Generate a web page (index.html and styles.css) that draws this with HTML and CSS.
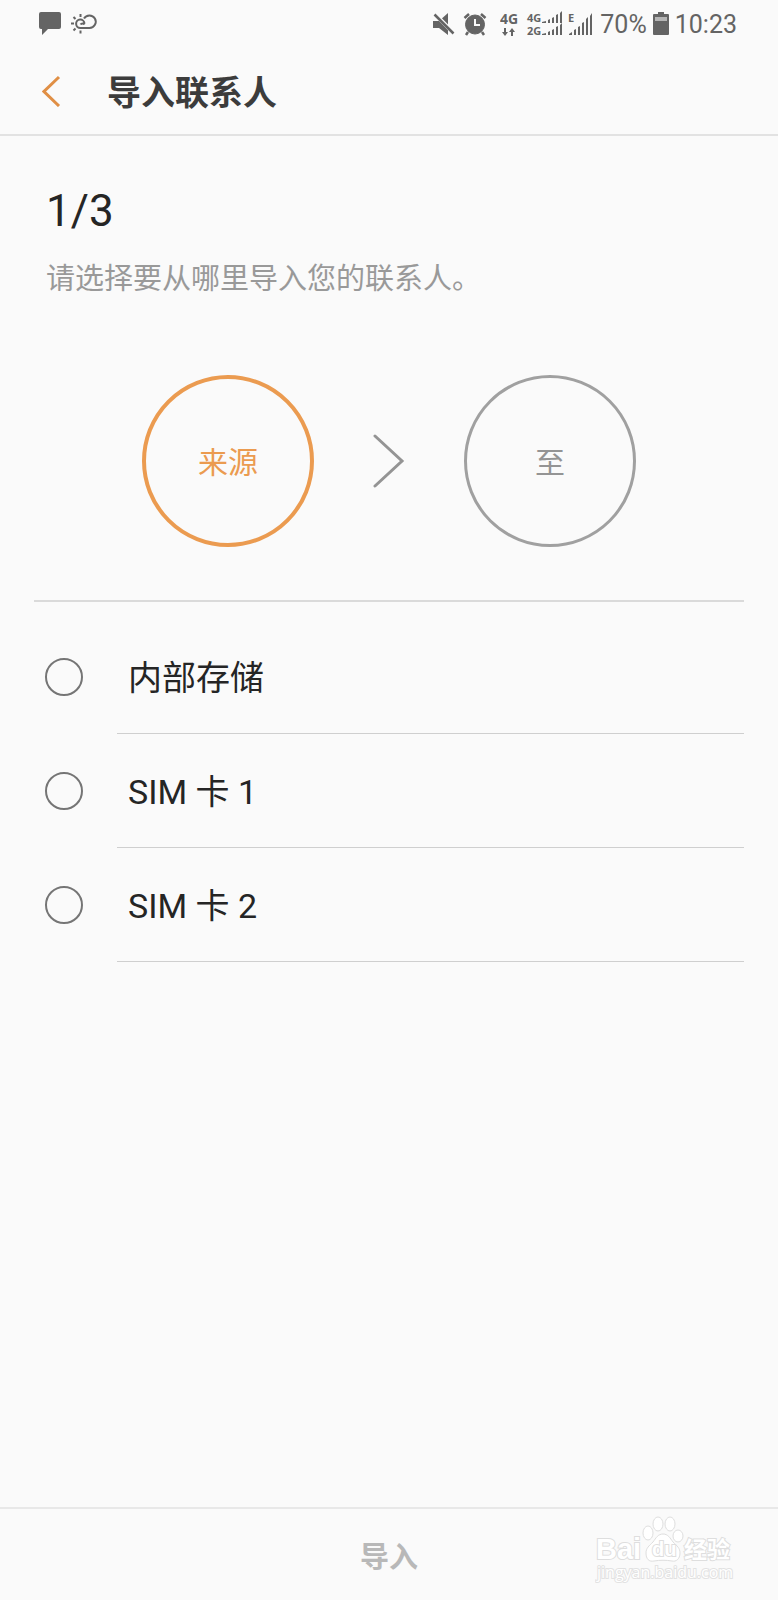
FILE: index.html
```html
<!DOCTYPE html>
<html lang="zh-CN">
<head>
	<meta charset="UTF-8">
	<meta name="viewport" content="width=device-width, initial-scale=1">
	<title>导入联系人</title>
	<link rel="stylesheet" href="styles.css">
</head>
<body>
	<div class="status">
		<div class="status-left">
			<svg width="24" height="24" viewBox="0 0 24 24" fill="#646464">
				<path d="M3 0h18a2 2 0 0 1 2 2v13a2 2 0 0 1-2 2H10l-6 6v-6H3a2 2 0 0 1-2-2V2a2 2 0 0 1 2-2z"/>
			</svg>
			<svg width="28" height="24" viewBox="0 0 28 24" fill="none" stroke="#646464" stroke-width="2">
				<path d="M14 6.500A6.300 6.300 0 1 1 19.500 16H10.500a4.200 4.200 0 1 1 4-4.500M14.500 12.500c-1-1.500-3-1.500-4 0"/>
				<path d="M10.500 2v3M10.500 18.500v3M1 11.500h3M3.500 5l2 2M3.500 18.500l2-2"/>
			</svg>
		</div>
		<div class="status-right">
			<svg width="22" height="24" viewBox="0 0 22 24" fill="#646464">
				<path d="M0 9h6l9-8v22l-9-7H0z"/>
				<path d="M1 1l19.500 20" stroke="#fafafa" stroke-width="4"/>
				<path d="M1.500 2.500l19 19" stroke="#646464" stroke-width="2.500"/>
			</svg>
			<svg class="alarm" width="24" height="24" viewBox="0 0 24 24" fill="none" stroke="#646464">
				<circle cx="12" cy="12.500" r="9.500" fill="#646464"/>
				<path d="M1.500 6l4.500-4M22.500 6L18 2M5 20l-2 3M19 20l2 3" stroke-width="2.500"/>
				<path d="M12 7v6h5" stroke="#fafafa" stroke-width="2"/>
			</svg>
			<svg class="signal" width="94" height="28" viewBox="0 -2 94 28" fill="#646464">
				<text class="net-big" x="0" y="12">4G</text>
				<path d="M4 16h2v4h2l-3 4-3-4h2zM11 24v-4H9l3-4 3 4h-2v4z"/>
				<text class="net" x="27" y="10">4G</text>
				<text class="net" x="27" y="23">2G</text>
				<path d="M42 11v-1l4-1v2zM48 11V8l2-1v4zM52 11V6l2-1v6zM56 11V3l2-1v9zM60 11V1l2-2v12z"/>
				<path d="M42 23v-1l4-1v2zM48 23v-3l2-1v4zM52 23v-5l2-1v6zM56 23v-8l2-1v9zM60 23V13l2-2v12z"/>
				<text class="net" x="68" y="10">E</text>
				<path d="M69 23v-1l3-2v3zM74 23v-5l2-1v6zM78 23v-8l2-1v9zM82 23V11l2-1v13zM86 23V7l2-2v18zM90 23V4l2-3v22z"/>
			</svg>
			<span>70%</span>
			<svg class="battery" width="16" height="24" viewBox="0 0 16 24" fill="#646464">
				<path d="M5 0h6v2h4a1 1 0 0 1 1 1v19a1 1 0 0 1-1 1H1a1 1 0 0 1-1-1V3a1 1 0 0 1 1-1h4z"/>
				<path d="M2 5h12v4H2z" fill="#b5b5b5"/>
			</svg>
			<span>10:23</span>
		</div>
	</div>

	<header class="header">
		<button class="back" type="button" aria-label="返回">
			<svg width="20" height="32" viewBox="0 0 20 32" fill="none" stroke="#e08f45" stroke-width="3">
				<path d="M17 2L2 16.500 17 31"/>
			</svg>
		</button>
		<h1>导入联系人</h1>
	</header>

	<main class="main">
		<section class="intro">
			<h2>1/3</h2>
			<p>请选择要从哪里导入您的联系人。</p>
		</section>

		<div class="steps">
			<div class="step active">来源</div>
			<svg width="32" height="56" viewBox="0 0 32 56" fill="none" stroke="#949494" stroke-width="3" stroke-linecap="round">
				<path d="M2 3l27 25L2 53"/>
			</svg>
			<div class="step">至</div>
		</div>

		<form class="list" id="source">
			<div class="item">
				<input type="radio" name="source" id="storage">
				<label for="storage">内部存储</label>
			</div>
			<div class="item">
				<input type="radio" name="source" id="sim1">
				<label for="sim1">SIM 卡 1</label>
			</div>
			<div class="item">
				<input type="radio" name="source" id="sim2">
				<label for="sim2">SIM 卡 2</label>
			</div>
		</form>
	</main>

	<footer class="footer">
		<button class="import" type="submit" form="source" disabled>导入</button>
		<svg class="mark" width="142" height="72" viewBox="0 0 142 72">
			<text class="mark-name" x="1" y="45">Bai</text>
			<g class="paw">
				<ellipse cx="53" cy="19" rx="5" ry="7"/>
				<ellipse cx="63" cy="10" rx="5" ry="7"/>
				<ellipse cx="75" cy="10" rx="5" ry="7"/>
				<ellipse cx="83" cy="22" rx="5" ry="6"/>
				<path d="M68 20c5 0 7 4 10 8 4 4 7 6 7 11 0 6-4 9-8 8-6-1-12-1-18 0-5 1-8-2-8-8 0-5 3-7 7-11 3-4 5-8 10-8z"/>
			</g>
			<text class="mark-du" x="57" y="42">du</text>
			<text class="mark-cn" x="89" y="44">经验</text>
			<text class="mark-url" x="2" y="64">jingyan.baidu.com</text>
		</svg>
	</footer>
</body>
</html>
```
FILE: styles.css
```css
*{
	padding: 0;
	margin: 0;
	box-sizing: border-box;
}
body{
	display: flex;
	flex-direction: column;
	min-height: 100vh;
	background: #fafafa;
	color: #252525;
	font-family: Roboto, "Noto Sans CJK SC", sans-serif;
}
button{
	border: 0;
	background: none;
	font-family: inherit;
}
.status{
	display: flex;
	justify-content: space-between;
	align-items: center;
	height: 48px;
	padding: 0 41px 0 38px;
	color: #646464;
	font-size: 25px;
}
.status-left, .status-right{
	display: flex;
	align-items: center;
}
.status-left{
	gap: 8px;
}
.alarm{
	margin: 0 13px 0 8px;
}
.battery{
	margin: 0 6px;
}
.signal{
	margin-right: 6px;
}
.net, .net-big{
	font-family: "Open Sans", sans-serif;
	font-weight: 700;
}
.net{
	font-size: 11px;
}
.net-big{
	font-size: 14px;
}
.header{
	display: flex;
	align-items: center;
	height: 88px;
	padding: 0 42px;
	border-bottom: 2px solid #e2e2e2;
}
.back{
	display: flex;
	width: 65px;
}
.header h1{
	padding-top: 3px;
	color: #3c3c3c;
	font-size: 34px;
	font-weight: 700;
	line-height: 48px;
}
.main{
	flex: 1;
	padding: 0 34px;
}
.intro{
	padding: 49px 12px 0;
}
.intro h2{
	font-size: 44px;
	font-weight: 400;
	line-height: 52px;
}
.intro p{
	margin-top: 20px;
	color: #999;
	font-size: 29px;
	line-height: 44px;
}
.steps{
	display: flex;
	justify-content: center;
	align-items: center;
	gap: 59px;
	padding: 74px 0 53px;
	border-bottom: 2px solid #dadada;
}
.step{
	display: flex;
	justify-content: center;
	align-items: center;
	width: 172px;
	height: 172px;
	padding-top: 4px;
	border: 3px solid #a0a0a0;
	border-radius: 50%;
	color: #949494;
	font-size: 30px;
	line-height: 44px;
}
.step.active{
	border: 4px solid #eb9b50;
	color: #eb9b50;
}
.list{
	padding-top: 18px;
}
.item{
	display: flex;
	align-items: center;
	height: 114px;
	padding-left: 11px;
}
.item input{
	appearance: none;
	width: 38px;
	height: 38px;
	border: 2px solid #757575;
	border-radius: 50%;
}
.item label{
	flex: 1;
	margin-left: 34px;
	padding: 3px 0 0 11px;
	border-bottom: 1px solid #cfcfcf;
	font-size: 34px;
	line-height: 110px;
}
.footer{
	position: relative;
	display: flex;
	justify-content: center;
	align-items: center;
	height: 93px;
	border-top: 2px solid #e8e8e8;
}
.import{
	color: #b8b8b8;
	font-size: 29px;
	font-weight: 700;
}
/* logo floats over the footer bar */
.mark{
	position: absolute;
	right: 41px;
	bottom: 14px;
	fill: #fff;
	stroke: #dedede;
	stroke-width: 2px;
	paint-order: stroke;
}
.paw{
	stroke-width: 1px;
	paint-order: normal;
}
.mark-name{
	font: 700 29px "Liberation Sans", sans-serif;
}
.mark-du{
	font: 700 20px "Liberation Sans", sans-serif;
}
.mark-cn{
	font: 700 23px "Noto Sans CJK SC", sans-serif;
}
.mark-url{
	font: 400 16px "Open Sans", sans-serif;
	stroke: #e2e2e2;
}
```
